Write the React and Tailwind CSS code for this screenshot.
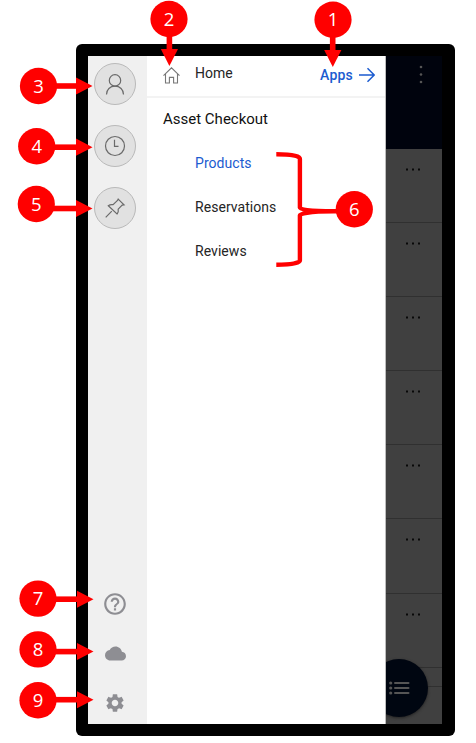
import React from "react";

const markers = [
  { n: 1, x: 333, y: 19.7, line: "M332.7 30V52", head: "M324.2 50h17.2l-8.6 17z" },
  { n: 2, x: 169, y: 19, line: "M169.4 30V50", head: "M160.8 49h17.2l-8.6 17z" },
  { n: 3, x: 38.5, y: 86, line: "M50 86H78", head: "M76 77.4v17.2l16.5-8.6z" },
  { n: 4, x: 36.7, y: 146.3, line: "M50 147.2H78", head: "M76 138.6v17.2l16.5-8.6z" },
  { n: 5, x: 36.3, y: 204, line: "M50 208.5H78", head: "M76 199.9v17.2l16.5-8.6z" },
  { n: 6, x: 354.3, y: 209.3 },
  { n: 7, x: 38, y: 598.6, line: "M50 599.2H79", head: "M77 590.7v17l16.5-8.5z" },
  { n: 8, x: 38, y: 649.4, line: "M50 651.6H79", head: "M77 643.1v17l16.5-8.5z" },
  { n: 9, x: 38, y: 700.3, line: "M50 699.7H79", head: "M77 691.2v17l16.5-8.5z" },
];

function RoundButton({ children }) {
  return (
    <div className="flex h-[42px] w-[42px] items-center justify-center rounded-full border border-[#b9b9b9] bg-[#e1e1e1]">
      <svg width="24" height="24" viewBox="0 0 24 24" fill="none" stroke="#6a6a6a" strokeWidth="1.2">
        {children}
      </svg>
    </div>
  );
}

function Sidebar() {
  return (
    <aside className="flex w-[59px] shrink-0 flex-col items-center justify-between bg-[#f0f0f0] pt-[6.500px] pr-[5px] pb-[9px]">
      <div className="flex flex-col gap-5">
        <RoundButton>
          <circle cx="12" cy="8.4" r="5.7" />
          <path d="M3.5 22.500c0-5 3.600-8.300 8.500-8.300s8.500 3.300 8.500 8.300" />
        </RoundButton>
        <RoundButton>
          <circle cx="12" cy="12" r="9.500" />
          <path d="M11.500 5.800v6.500h4" />
        </RoundButton>
        <RoundButton>
          <path d="M2.700 21.300l6.100-6.100M15.200 3.100l5.800 5.800-1.800.2-4 4c.4 1.900 0 3.500-1.200 4.900L5.300 9.800c1.500-1.200 3-1.400 4.800-1.100l4.400-4.200z" />
        </RoundButton>
      </div>
      <div className="flex flex-col items-center">
        <svg width="26" height="26" viewBox="0 0 24 24" fill="#8e8e93">
          <path d="M11 18h2v-2h-2v2zm1-16C6.480 2 2 6.480 2 12s4.480 10 10 10 10-4.480 10-10S17.520 2 12 2zm0 18c-4.410 0-8-3.590-8-8s3.590-8 8-8 8 3.590 8 8-3.590 8-8 8zm0-14c-2.210 0-4 1.790-4 4h2c0-1.100.9-2 2-2s2 .9 2 2c0 2-3 1.750-3 5h2c0-2.250 3-2.500 3-5 0-2.210-1.790-4-4-4z" />
        </svg>
        <svg className="mt-[26px]" width="21" height="21" viewBox="0 0 24 24" fill="#8e8e93">
          <path d="M19.350 10.040C18.670 6.590 15.640 4 12 4 9.110 4 6.600 5.640 5.350 8.040 2.340 8.360 0 10.910 0 14c0 3.310 2.690 6 6 6h13c2.760 0 5-2.240 5-5 0-2.640-2.050-4.780-4.650-4.960z" />
        </svg>
        <svg className="mt-[28px] mb-px" width="22" height="22" viewBox="0 0 24 24" fill="#8e8e93">
          <path d="M19.140 12.940c.04-.3.060-.61.060-.94 0-.32-.02-.64-.07-.94l2.030-1.580c.18-.14.23-.41.120-.61l-1.920-3.320c-.12-.22-.37-.29-.59-.22l-2.390.960c-.5-.38-1.030-.7-1.620-.94l-.36-2.540c-.04-.24-.24-.41-.48-.41h-3.840c-.24 0-.43.17-.47.41l-.36 2.540c-.59.240-1.130.570-1.620.94l-2.390-.96c-.22-.08-.47 0-.59.22L2.740 8.870c-.12.210-.08.470.12.610l2.030 1.580c-.05.3-.09.630-.09.940s.02.640.07.94l-2.030 1.580c-.18.140-.23.410-.12.610l1.920 3.320c.12.220.37.290.59.22l2.390-.96c.5.380 1.030.7 1.620.94l.36 2.540c.05.240.24.410.48.410h3.840c.24 0 .44-.17.47-.41l.36-2.540c.59-.24 1.130-.56 1.620-.94l2.390.96c.22.080.47 0 .59-.22l1.920-3.320c.12-.22.070-.47-.12-.61l-2.010-1.580zM12 15.600c-1.980 0-3.600-1.620-3.600-3.600s1.620-3.600 3.600-3.600 3.600 1.620 3.600 3.600-1.620 3.600-3.600 3.600z" />
        </svg>
      </div>
    </aside>
  );
}

function Menu() {
  return (
    <main className="w-[239px] shrink-0 border-r border-[#bdbdbd] bg-white text-[#252525]">
      <header className="flex h-[42px] items-center border-b-2 border-[#f3f3f3] pb-0.5 pl-[15.500px]">
        <svg width="17" height="17" viewBox="0 0 17 17" fill="none" stroke="#777" strokeWidth="1.1">
          <path d="M.5 8.700l8-7.900 8 7.900M2.500 7v9h3.900v-5.600h4.200V16h3.900V7" />
        </svg>
        <span className="ml-[15.500px] pb-1 text-[14px] leading-5">Home</span>
        <span className="ml-auto text-[14px] font-medium leading-5 tracking-[0.2px] text-[#1b5bd0]">Apps</span>
        <svg className="mr-[10.500px] ml-[5.500px]" width="16" height="16" viewBox="0 0 16 16" fill="none" stroke="#1b5bd0" strokeWidth="1.500">
          <path d="M0 8h15M8.500 1.300L15.200 8l-6.700 6.700" />
        </svg>
      </header>
      <h1 className="mt-[11px] ml-4 text-[15px] leading-5 text-[#111]">Asset Checkout</h1>
      <nav className="mt-6 ml-12 flex flex-col gap-6 text-[14px] leading-5 tracking-[0.050px]">
        <span className="text-[#1b5bd0]">Products</span>
        <span>Reservations</span>
        <span>Reviews</span>
      </nav>
    </main>
  );
}

function Dots() {
  return (
    <svg className="ml-5" width="16" height="3" viewBox="0 0 16 3" fill="#080808">
      <rect x="0" y=".5" width="2" height="2" />
      <rect x="6" y=".5" width="2" height="2" />
      <rect x="12" y=".5" width="2" height="2" />
    </svg>
  );
}

function DimmedPage() {
  return (
    <section className="relative flex w-14 shrink-0 flex-col overflow-hidden bg-[#404040]">
      <div className="h-[93px] shrink-0 bg-[#00030d] pt-[9px] pl-[33px]">
        <svg width="4" height="19" viewBox="0 0 4 19" fill="#555">
          <circle cx="2" cy="2" r="1.300" />
          <circle cx="2" cy="9.500" r="1.300" />
          <circle cx="2" cy="17" r="1.300" />
        </svg>
      </div>
      {[0, 1, 2, 3, 4, 5, 6].map((i) => (
        <div key={i} className="h-[74.100px] shrink-0 border-b border-[#303030] pt-[19px]">
          <Dots />
        </div>
      ))}
      <div className="h-[19px] shrink-0 border-b border-[#303030]" />
      <div className="absolute top-[603px] -left-4 flex h-[58px] w-[58px] items-center rounded-full bg-[#000611] pl-[19px] shadow-[0_1px_3px_#222]">
        <svg width="21" height="14" viewBox="0 0 21 14" fill="#555">
          <circle cx="1.700" cy="2" r="1.600" />
          <circle cx="1.700" cy="7" r="1.600" />
          <circle cx="1.700" cy="12" r="1.600" />
          <rect x="5" y="1" width="15.500" height="2" rx="1" />
          <rect x="5" y="6" width="15.500" height="2" rx="1" />
          <rect x="5" y="11" width="15.500" height="2" rx="1" />
        </svg>
      </div>
    </section>
  );
}

function Callouts() {
  return (
    <svg className="absolute inset-0" width="476" height="743" viewBox="0 0 476 743">
      <path
        d="M276.300 154.300c14 0 23.600 1.300 23.600 4.500v49c0 1.500 8 3.400 34 3.400h8M333.900 211.400c-26 0-34 2.200-34 3.800v45.300c0 2.800-9 4.200-23.600 4.200"
        fill="none"
        stroke="#f00"
        strokeWidth="4.400"
      />
      {markers.map((m) => (
        <g key={m.n} fill="#f00">
          {m.line && <path d={m.line} stroke="#f00" strokeWidth="5.600" />}
          {m.head && <path d={m.head} />}
          <ellipse cx={m.x} cy={m.y} rx="18.600" ry="18.200" />
          <text x={m.x} y={m.y + 6.500} textAnchor="middle" fill="#fff" fontSize="18.500" fontFamily="'Open Sans', 'Noto Sans', sans-serif">
            {m.n}
          </text>
        </g>
      ))}
    </svg>
  );
}

export default function App() {
  return (
    <div className="relative h-[743px] w-[476px] overflow-hidden bg-white pt-[43.500px] pl-[75.500px] font-['Roboto',sans-serif]">
      <div className="flex h-[692.500px] w-[379px] rounded-[6px] bg-black p-[12.500px]">
        <Sidebar />
        <Menu />
        <DimmedPage />
      </div>
      <Callouts />
    </div>
  );
}
